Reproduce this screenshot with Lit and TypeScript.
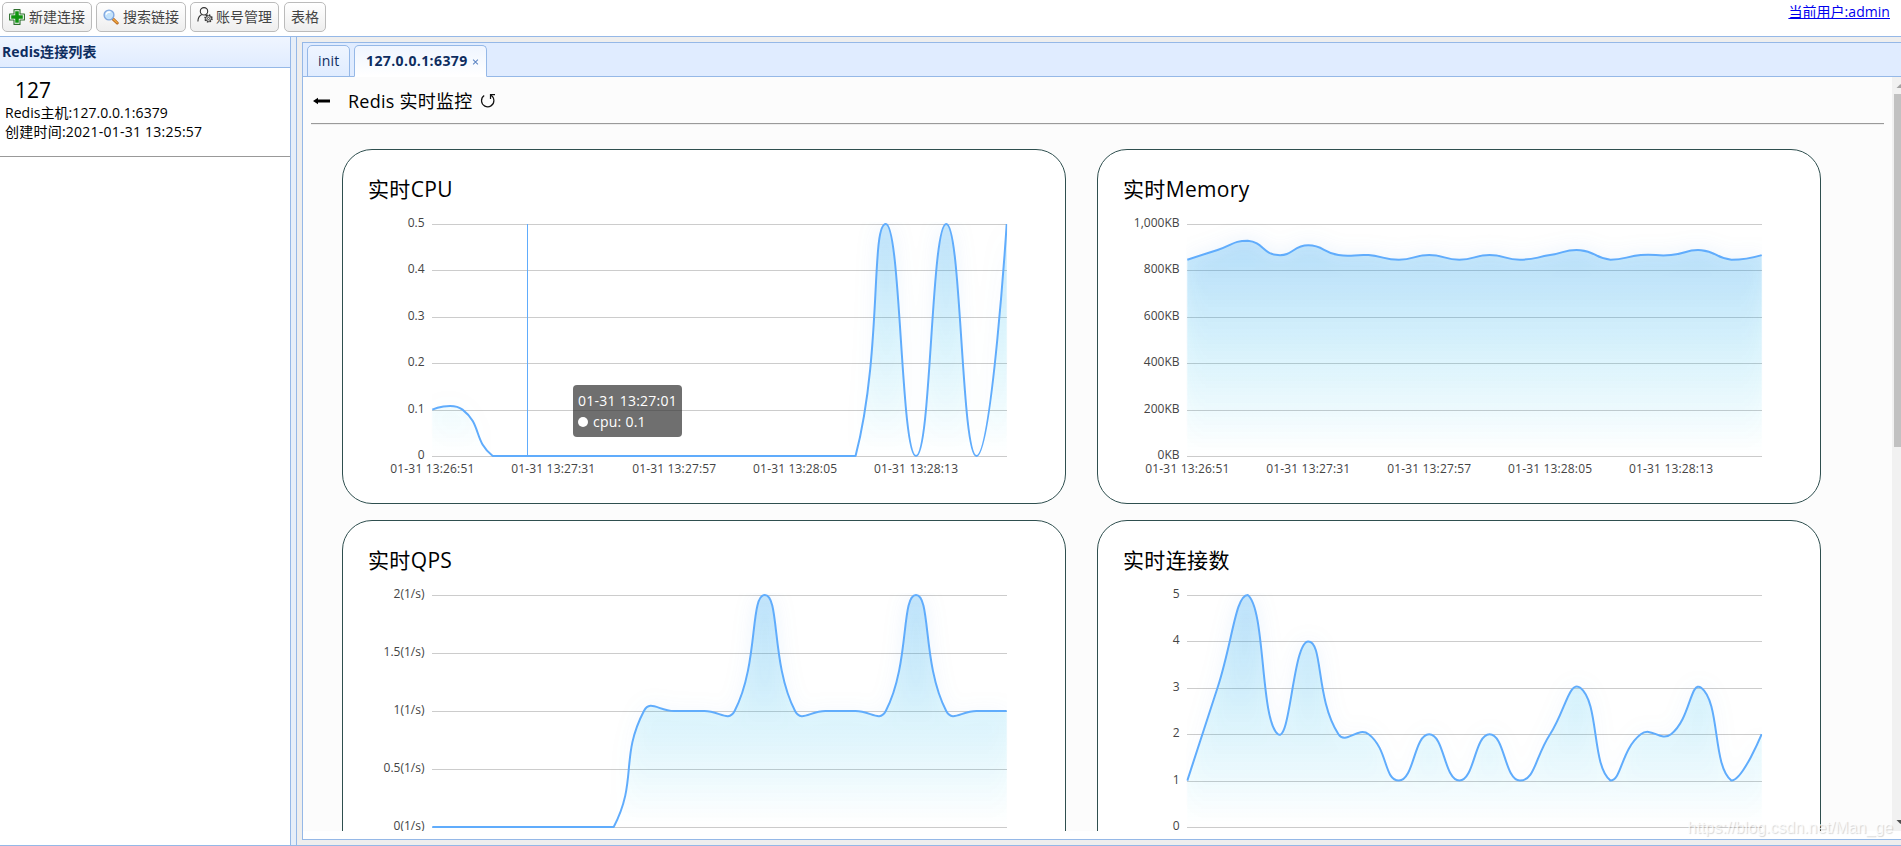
import { LitElement, html, svg, css } from "lit";
import { customElement, property } from "lit/decorators.js";

type Pt = [number, number];

const LATIN = css`"Open Sans", "Noto Sans CJK SC", sans-serif`;

// Plot box, in the coordinates of the chart's own svg.
const PLOT = { left: 89.3, top: 14, width: 574.4, height: 232 };

const TIMES = ["01-31 13:26:51", "01-31 13:27:31", "01-31 13:27:57", "01-31 13:28:05", "01-31 13:28:13"];

function clamp(v: number, lo: number, hi: number) {
  return Math.min(Math.max(v, lo), hi);
}

// Smooth line through all points; control points stay inside the data's bounding box.
function smoothPath(pts: Pt[], smooth = 0.5): string {
  const xs = pts.map((p) => p[0]);
  const ys = pts.map((p) => p[1]);
  const [x0, x1] = [Math.min(...xs), Math.max(...xs)];
  const [y0, y1] = [Math.min(...ys), Math.max(...ys)];
  const fit = (p: Pt): Pt => [clamp(p[0], x0, x1), clamp(p[1], y0, y1)];
  let d = `M${pts[0][0]} ${pts[0][1]}`;
  let cp0: Pt = pts[0];
  for (let i = 1; i < pts.length; i++) {
    const p = pts[i];
    let cp1: Pt = p;
    let next: Pt = p;
    if (i < pts.length - 1) {
      const a = pts[i - 1];
      const b = pts[i + 1];
      const v: Pt = [b[0] - a[0], b[1] - a[1]];
      const before = Math.hypot(p[0] - a[0], p[1] - a[1]);
      const after = Math.hypot(b[0] - p[0], b[1] - p[1]);
      const ratio = after / (after + before);
      cp1 = [p[0] - v[0] * smooth * (1 - ratio), p[1] - v[1] * smooth * (1 - ratio)];
      next = [p[0] + v[0] * smooth * ratio, p[1] + v[1] * smooth * ratio];
    }
    const c0 = fit(cp0);
    const c1 = fit(cp1);
    d += `C${c0[0]} ${c0[1]} ${c1[0]} ${c1[1]} ${p[0]} ${p[1]}`;
    cp0 = next;
  }
  return d;
}

@customElement("live-chart")
export class LiveChart extends LitElement {
  @property({ attribute: false }) heading = "";
  @property({ attribute: false }) ticks: string[] = [];
  @property({ attribute: false }) times: string[] = [];
  @property({ attribute: false }) max = 1;
  @property({ attribute: false }) values: number[] = [];
  @property({ attribute: false }) pointer?: number;

  static styles = css`
    :host {
      display: block;
      box-sizing: border-box;
      position: relative;
      height: 355px;
      border: 1px solid #2f4f4f;
      border-radius: 30px;
      background: #fff;
      overflow: hidden;
      font-family: ${LATIN};
    }
    .title {
      height: 60px;
      box-sizing: border-box;
      padding: 25px 0 0 25px;
      font-size: 21px;
      line-height: 28px;
      letter-spacing: 0.35px;
      color: #000;
    }
    svg {
      display: block;
    }
    .grid {
      stroke: #ccc;
      stroke-width: 1;
      shape-rendering: crispEdges;
    }
    .label {
      font-size: 12px;
      fill: #444;
    }
    .line {
      fill: none;
      stroke: #60acfc;
      stroke-width: 2;
      stroke-linejoin: bevel;
    }
    .area {
      filter: drop-shadow(0 0 10px rgba(50, 135, 225, 0.5));
    }
    .pointer {
      stroke: #60acfc;
      stroke-width: 1;
      shape-rendering: crispEdges;
    }
    .tip {
      position: absolute;
      left: 230px;
      top: 235px;
      width: 109px;
      height: 52px;
      box-sizing: border-box;
      padding: 5px;
      border-radius: 4px;
      background: rgba(50, 50, 50, 0.7);
      color: #fff;
      font-size: 14px;
      line-height: 21px;
      letter-spacing: 0.25px;
      white-space: nowrap;
    }
    .row {
      display: flex;
      align-items: center;
      gap: 5px;
    }
    .dot {
      width: 10px;
      height: 10px;
      border-radius: 50%;
      background: #fff;
    }
  `;

  render() {
    const { left, top, width, height } = PLOT;
    const step = width / (this.values.length - 1);
    const base = top + height;
    const pts: Pt[] = this.values.map((v, i) => [left + i * step, base - (v / this.max) * height]);
    const line = smoothPath(pts);
    const area = `${line}L${left + width} ${base}L${left} ${base}Z`;
    const n = this.ticks.length - 1;
    return html`
      <div class="title">${this.heading}</div>
      <svg width="722" height="293" viewBox="0 0 722 293">
        <defs>
          <linearGradient id="fill" x1="0" y1="0" x2="0" y2="1">
            <stop offset="0" stop-color="rgb(10,150,240)" stop-opacity="0.23"></stop>
            <stop offset="1" stop-color="rgb(0,230,240)" stop-opacity="0"></stop>
          </linearGradient>
          <clipPath id="clip"><rect x=${left - 1} y=${top - 2} width=${width + 1.5} height=${height + 3}></rect></clipPath>
        </defs>
        ${this.ticks.map((t, i) => {
          const y = Math.round(base - (i / n) * height) + 0.5;
          return svg`
            <line class="grid" x1="89" x2="664" y1=${y} y2=${y}></line>
            <text class="label" x="81.5" y=${y + 2.8} text-anchor="end">${t}</text>`;
        })}
        ${this.times.map(
          (t, i) => svg`<text class="label" x=${left + i * 4 * step} y="263" text-anchor="middle" textLength="84">${t}</text>`
        )}
        <g clip-path="url(#clip)">
          <g class="area"><path d=${area} fill="url(#fill)"></path></g>
          <path class="line" d=${line}></path>
        </g>
        ${this.pointer !== undefined
          ? svg`<line class="pointer" x1=${this.pointer} x2=${this.pointer} y1=${top} y2=${base}></line>`
          : null}
      </svg>
      ${this.pointer !== undefined
        ? html`<div class="tip">
            <div>01-31 13:27:01</div>
            <div class="row"><span class="dot"></span><span>cpu: 0.1</span></div>
          </div>`
        : null}
    `;
  }
}

const addIcon = html`<svg width="16" height="16" viewBox="0 0 16 16">
  <path d="M5 .6h6v4.400h4.400v6H11v4.400H5V11H.6V5H5z" fill="#fff" stroke="#2f6f2f" stroke-width="1.100" stroke-linejoin="round"/>
  <path d="M6.200 2.200h3.600v4h4v3.600h-4v4H6.200v-4h-4V6.200h4z" fill="#109410"/>
</svg>`;

const searchIcon = html`<svg width="16" height="16" viewBox="0 0 16 16">
  <path d="M9.600 9.600l4.600 4.400" stroke="#b5651d" stroke-width="3" stroke-linecap="round"/>
  <path d="M10.400 10.200l3.700 3.500" stroke="#f0a840" stroke-width="1.500" stroke-linecap="round"/>
  <circle cx="6" cy="6" r="4.900" fill="#c3e2fb" stroke="#82a9e0" stroke-width="1.400"/>
  <path d="M3.200 5.600a3 3 0 0 1 4.200-2.300" fill="none" stroke="#fff" stroke-width="1.300"/>
</svg>`;

const userIcon = html`<svg width="16" height="16" viewBox="0 0 16 16" fill="none" stroke="#333" stroke-width="1.100">
  <circle cx="7" cy="4.300" r="3.700"/>
  <path d="M4.800 7.500C2.600 8.600 1 10.800.9 14.400"/>
  <path d="M8.600 8L10 9"/>
  <circle cx="11.500" cy="11.500" r="3.500" stroke-width="1.500" stroke-dasharray="1.500 1.250"/>
  <circle cx="11.500" cy="11.500" r="2.800" stroke-width="1"/>
  <circle cx="11.500" cy="11.500" r="1.100" stroke-width=".9"/>
</svg>`;

@customElement("app-root")
export class AppRoot extends LitElement {
  static styles = css`
    :host {
      display: flex;
      flex-direction: column;
      position: relative;
      box-sizing: border-box;
      width: 100%;
      height: 846px;
      overflow: hidden;
      background: #fff;
      color: #000;
      font-family: ${LATIN};
      font-size: 14px;
    }
    * {
      box-sizing: border-box;
    }
    svg {
      display: block;
      flex: none;
    }
    .toolbar {
      display: flex;
      flex: none;
      height: 36px;
      padding: 2px 11px 0 2px;
    }
    .button {
      display: flex;
      align-items: center;
      height: 30px;
      margin-right: 4px;
      padding: 0 6px;
      gap: 4px;
      border: 1px solid #bbb;
      border-radius: 5px;
      background: linear-gradient(#fff, #eee);
      color: #444;
      line-height: 28px;
      white-space: nowrap;
    }
    .b1 {
      width: 90px;
    }
    .b2 {
      width: 90px;
    }
    .b3 {
      width: 89px;
      gap: 3px;
    }
    .b3 svg {
      margin-top: -5px;
    }
    .b4 {
      width: 42px;
      margin-left: 1px;
    }
    .user {
      margin-left: auto;
      height: 20px;
      line-height: 20px;
      color: #00e;
      text-decoration: underline;
      letter-spacing: 0.05px;
    }
    .body {
      display: flex;
      flex: 1;
      min-height: 0;
      border-top: 1px solid #95b8e7;
      border-bottom: 1px solid #95b8e7;
    }
    .side {
      flex: none;
      width: 291px;
      border-right: 1px solid #95b8e7;
    }
    .side-head {
      height: 31px;
      padding-left: 2px;
      border-bottom: 1px solid #95b8e7;
      background: linear-gradient(#eff5ff, #e0ecff);
      color: #0e2d5f;
      font-weight: 700;
      line-height: 29px;
      letter-spacing: 0.1px;
    }
    .conn {
      height: 89px;
      padding: 7px 0 0 5px;
      border-bottom: 1px solid #999;
      line-height: 19px;
    }
    .name {
      padding: 2px 0 0 10px;
      height: 28px;
      font-size: 21px;
      line-height: 27px;
    }
    .host {
      letter-spacing: 0.05px;
    }
    .created {
      letter-spacing: 0.23px;
    }
    .splitter {
      flex: none;
      width: 6px;
      border-right: 1px solid #95b8e7;
      background: #e6eef8;
    }
    .main {
      flex: 1;
      min-width: 0;
      padding: 5px 0 5px 5px;
      background: #eee;
    }
    .panel {
      display: flex;
      flex-direction: column;
      height: 798px;
      border: 1px solid #95b8e7;
      border-right: 0;
      background: #fff;
    }
    .tabs {
      display: flex;
      flex: none;
      align-items: flex-end;
      gap: 4px;
      height: 34px;
      padding-left: 4px;
      background: linear-gradient(#95b8e7, #95b8e7) bottom / 100% 1px no-repeat #e0ecff;
      color: #0e2d5f;
    }
    .tab {
      height: 32px;
      border: 1px solid #95b8e7;
      border-radius: 5px 5px 0 0;
      background: linear-gradient(#eff5ff, #e0ecff);
      line-height: 30px;
      white-space: nowrap;
    }
    .init {
      width: 43px;
      padding-left: 10px;
      letter-spacing: 0.2px;
    }
    .active {
      display: flex;
      width: 133px;
      padding-left: 11px;
      border-bottom-color: #fff;
      background: linear-gradient(#eff5ff, #fff);
      font-weight: 700;
      letter-spacing: 0.4px;
    }
    .close {
      align-self: center;
      margin-left: 4px;
      padding-top: 1px;
    }
    .view {
      display: flex;
      flex: none;
      height: 754px;
      overflow: hidden;
    }
    .page {
      flex: 1;
      min-width: 0;
      padding: 0 8px;
      background: #fcfcfc;
    }
    .heading {
      display: flex;
      align-items: center;
      height: 46px;
      padding: 2px 0 0 2px;
      font-size: 18px;
      letter-spacing: 0.25px;
      white-space: pre;
    }
    .heading span {
      margin: 0 7px 2px 18px;
    }
    .rule {
      height: 2px;
      border-top: 1px solid #9a9a9a;
      border-bottom: 1px solid #eee;
    }
    .cards {
      display: grid;
      grid-template-columns: 724px 724px;
      gap: 16px 31px;
      padding: 24px 0 0 31px;
    }
    .scroll {
      flex: none;
      width: 9px;
      overflow: hidden;
      background: #f1f1f1;
    }
    .scroll-in {
      display: flex;
      flex-direction: column;
      align-items: center;
      width: 17px;
      height: 754px;
    }
    .thumb {
      width: 13px;
      height: 353px;
      background: #c1c1c1;
    }
    .rest {
      flex: 1;
    }
    .mark {
      position: absolute;
      right: 8px;
      top: 818px;
      font-family: "Liberation Sans", sans-serif;
      font-size: 16px;
      line-height: 20px;
      color: rgba(255, 255, 255, 0.75);
      text-shadow: 1px 1px 1px rgba(0, 0, 0, 0.16);
    }
  `;

  render() {
    return html`
      <div class="toolbar">
        <div class="button b1">${addIcon}新建连接</div>
        <div class="button b2">${searchIcon}搜索链接</div>
        <div class="button b3">${userIcon}账号管理</div>
        <div class="button b4">表格</div>
        <a class="user">当前用户:admin</a>
      </div>
      <div class="body">
        <div class="side">
          <div class="side-head">Redis连接列表</div>
          <div class="conn">
            <div class="name">127</div>
            <div class="host">Redis主机:127.0.0.1:6379</div>
            <div class="created">创建时间:2021-01-31 13:25:57</div>
          </div>
        </div>
        <div class="splitter"></div>
        <div class="main">
          <div class="panel">
            <div class="tabs">
              <div class="tab init">init</div>
              <div class="tab active">
                127.0.0.1:6379
                <svg class="close" width="7" height="9" viewBox="0 0 7 9"><path d="M.8 1.800l5.400 5.400M6.200 1.800L.8 7.200" stroke="#5f86c4" stroke-width="1.200" /></svg>
              </div>
            </div>
            <div class="view">
              <div class="page">
                <div class="heading">
                  <svg width="17" height="8" viewBox="0 0 17 8"><path d="M0 4L5 .8V2.600H17V5.400H5V7.200z" fill="#000" /></svg>
                  <span>Redis 实时监控</span>
                  <svg width="16" height="16" viewBox="0 0 16 16" fill="none" stroke="#111" stroke-width="1.200"><path d="M4.200 2.500A6.200 6.200 0 1 0 13.900 7.500C13.800 5.200 12.700 3.300 10.800 2" /><path d="M15 1.600H10.500V6" /></svg>
                </div>
                <div class="rule"></div>
                <div class="cards">
                  <live-chart
                    .heading=${"实时CPU"}
                    .ticks=${["0", "0.1", "0.2", "0.3", "0.4", "0.5"]}
                    .times=${TIMES}
                    .max=${0.5}
                    .values=${[0.1, 0.1, 0, 0, 0, 0, 0, 0, 0, 0, 0, 0, 0, 0, 0, 0.5, 0, 0.5, 0, 0.5]}
                    .pointer=${184.5}
                  ></live-chart>
                  <live-chart
                    .heading=${"实时Memory"}
                    .ticks=${["0KB", "200KB", "400KB", "600KB", "800KB", "1,000KB"]}
                    .times=${TIMES}
                    .max=${1000}
                    .values=${[846, 888, 928, 866, 908, 866, 866, 846, 866, 846, 866, 846, 866, 887, 846, 866, 866, 887, 846, 866]}
                  ></live-chart>
                  <live-chart
                    .heading=${"实时QPS"}
                    .ticks=${["0(1/s)", "0.5(1/s)", "1(1/s)", "1.5(1/s)", "2(1/s)"]}
                    .max=${2}
                    .values=${[0, 0, 0, 0, 0, 0, 0, 1, 1, 1, 1, 2, 1, 1, 1, 1, 2, 1, 1, 1]}
                  ></live-chart>
                  <live-chart
                    .heading=${"实时连接数"}
                    .ticks=${["0", "1", "2", "3", "4", "5"]}
                    .max=${5}
                    .values=${[1, 3, 5, 2, 4, 2, 2, 1, 2, 1, 2, 1, 2, 3, 1, 2, 2, 3, 1, 2]}
                  ></live-chart>
                </div>
              </div>
              <div class="scroll">
                <div class="scroll-in">
                  <svg width="17" height="17" viewBox="0 0 17 17"><path d="M4.500 11L8.500 7L12.500 11z" fill="#a3a3a3" /></svg>
                  <div class="thumb"></div>
                  <div class="rest"></div>
                  <svg width="17" height="17" viewBox="0 0 17 17"><path d="M4.500 6L8.500 10L12.500 6z" fill="#505050" /></svg>
                </div>
              </div>
            </div>
          </div>
        </div>
      </div>
      <div class="mark">https://blog.csdn.net/Man_ge</div>
    `;
  }
}
